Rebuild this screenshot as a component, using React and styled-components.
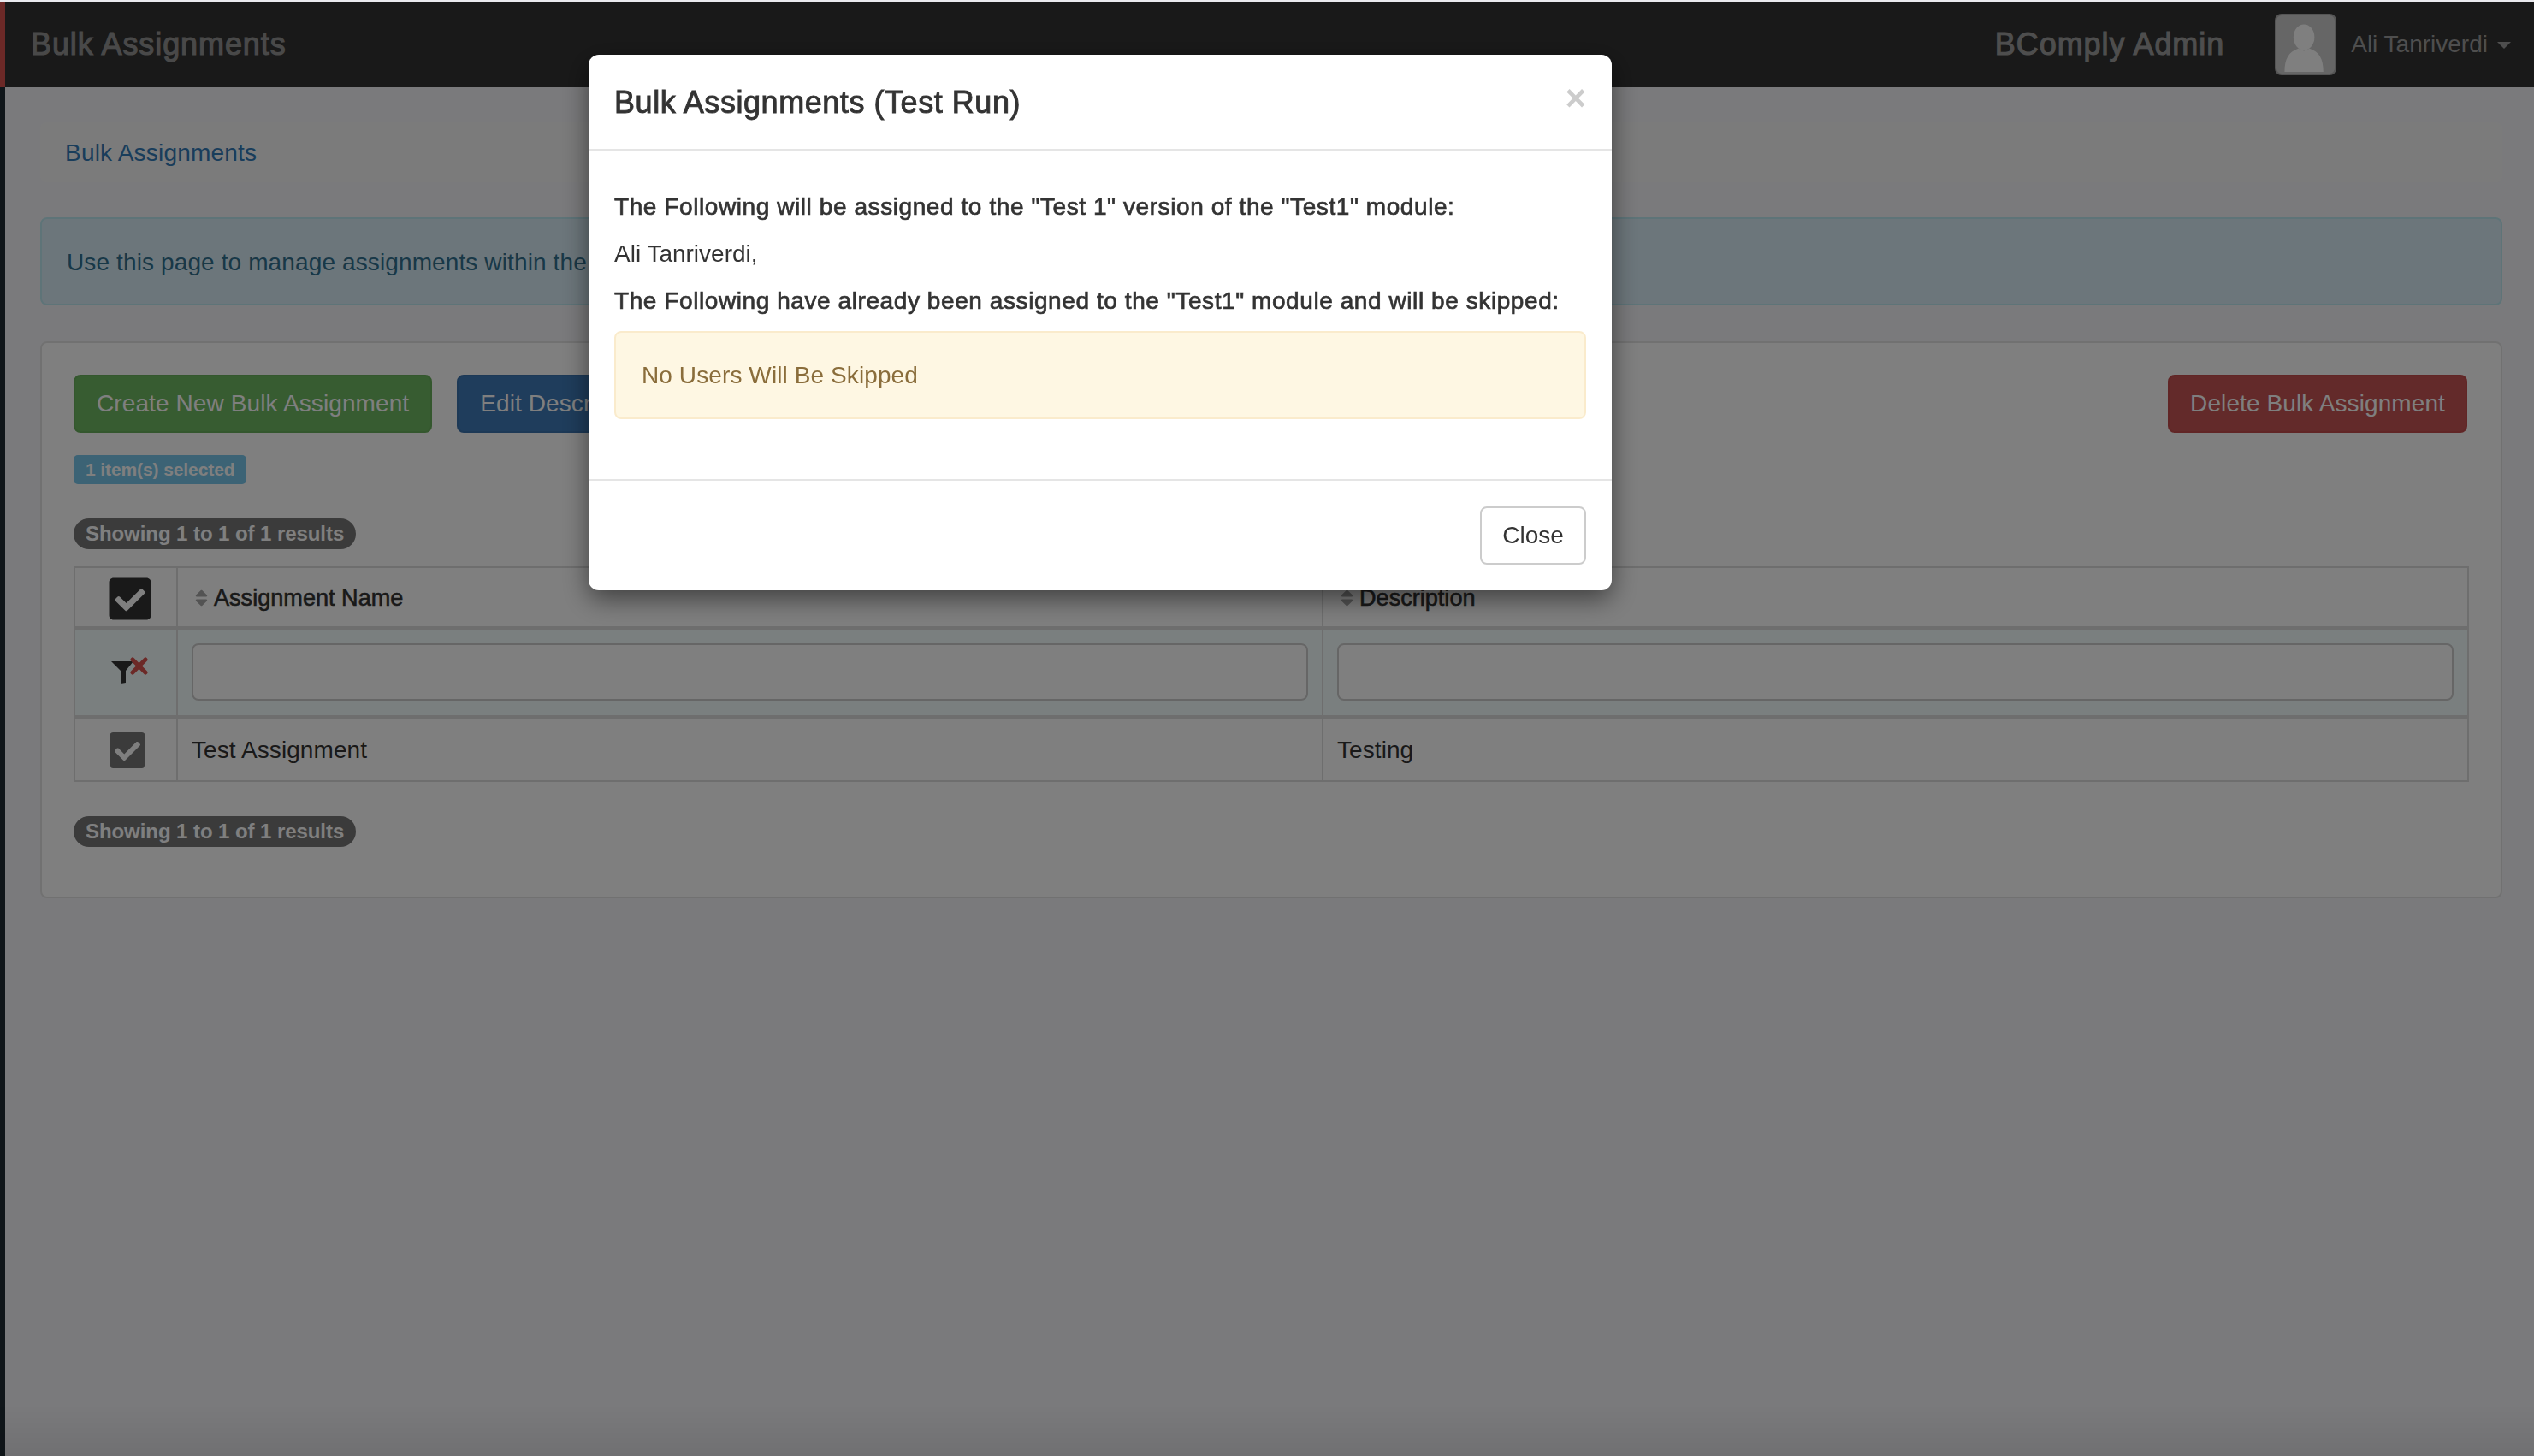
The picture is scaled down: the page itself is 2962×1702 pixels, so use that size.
import React from "react";
import styled, { createGlobalStyle } from "styled-components";
import { FaCheckSquare, FaSort } from "react-icons/fa";

const Global = createGlobalStyle`
  html, body { margin: 0; padding: 0; height: 100%; }
  body { font-family: "Liberation Sans", Arial, sans-serif; font-size: 28px; line-height: 40px; color: #333; background: #f5f5f8; overflow: hidden; }
  * { box-sizing: border-box; }
`;

const TopEdge = styled.div`height: 2px; background: #e9e9ee; position: relative; z-index: 20;`;
const Navbar = styled.header`
  height: 100px; background: #333; border-left: 6px solid #d9534f;
  display: flex; align-items: center; padding: 0 27px 0 30px;
`;
const Brand = styled.div`font-size: 36px; color: #939393; -webkit-text-stroke: 1.1px #939393; letter-spacing: 0.9px; flex: 1; margin-top: -1px;`;
const Role = styled.div`font-size: 36px; color: #9d9d9d; -webkit-text-stroke: 1.1px #9d9d9d; letter-spacing: 0.95px; margin-right: 59px; margin-top: -1px;`;
const Avatar = styled.svg`width: 72px; height: 72px; display: block; margin-right: 17px; border: 2px solid #aaa; border-radius: 8px; background: #ccc;`;
const UserName = styled.div`color: #9d9d9d; font-size: 28px; margin-right: 11px;`;
const Caret = styled.span`width: 0; height: 0; border-left: 8px solid transparent; border-right: 8px solid transparent; border-top: 8px solid #9d9d9d; margin-top: 2px;`;

const Main = styled.main`
  border-left: 6px solid #202c34; min-height: 1600px;
  padding: 41px 37px 0 41px;
`;
const Breadcrumb = styled.nav`height: 70px; background: #f7f7f7; border-radius: 8px; padding: 16px 29px 0; color: #337ab7; margin-bottom: 41px; letter-spacing: 0.2px;`;
const Info = styled.div`height: 103px; background: #d9edf7; border: 2px solid #bce8f1; border-radius: 8px; padding: 31px 29px 0; color: #31708f; margin-bottom: 42px; white-space: nowrap; letter-spacing: 0.12px;`;
const Panel = styled.section`height: 651px; background: #fff; border: 2px solid #e3e3e3; border-radius: 8px; padding: 37px;`;
const Toolbar = styled.div`display: flex; gap: 29px; margin-bottom: 26px;`;
const Btn = styled.button`
  height: 68px; padding: 0 ${p => (p.$push ? 24 : 25)}px; font: inherit; letter-spacing: 0.1px; color: #fff; border-radius: 8px;
  background: ${p => p.$bg}; border: 2px solid ${p => p.$border}; white-space: nowrap;
  margin: ${p => (p.$push ? "0 2px 0 auto" : "0")};
`;
const SelectedLabel = styled.div`
  width: fit-content; height: 34px; padding: 0 14px; background: #78c6ea; color: #fff; font-size: 21px; font-weight: 700;
  line-height: 34px; border-radius: 5px; margin-bottom: 40px; letter-spacing: -0.1px;
`;
const Count = styled.div`
  width: fit-content; height: 36px; padding: 0 14px; background: #777; color: #fff; font-size: 24px; font-weight: 700; line-height: 36px; letter-spacing: -0.07px;
  border-radius: 20px; margin-top: ${p => p.$top}px; margin-bottom: ${p => p.$bottom}px;
`;
const Table = styled.table`width: 2800px; table-layout: fixed; border-collapse: collapse;`;
const Th = styled.th`
  border: 2px solid #ddd; border-bottom-width: 4px; height: 71px; padding: 4px 16px 0 20px; text-align: left; font-weight: 400; color: #333;
  width: ${p => p.$w ? `${p.$w}px` : "auto"}; vertical-align: middle;
`;
const FilterCell = styled.td`border: 2px solid #ddd; border-bottom-width: 4px; background: #f5ffff; height: 104px; padding: 0 16px; position: relative;`;
const Td = styled.td`border: 2px solid #ddd; height: 75px; padding: 1px 15px 0 16px; letter-spacing: 0.08px;`;
const HeadLabel = styled.span`display: inline-flex; align-items: center; gap: 7px; font-size: 27.1px; -webkit-text-stroke: 0.6px #333;`;
const SortIcon = styled(FaSort)`width: 15px; height: 24px; color: #a6a6a6; flex: none;`;
const CheckCellInner = styled.div`display: flex; padding-left: ${p => p.$pad}px; color: ${p => p.$color};`;
const FilterClear = styled.svg`display: block; width: 44px; height: 32px; margin: -4px 0 0 25px;`;
const Filter = styled.div`width: 100%; height: 67px; margin-top: -2px; background: #fff; border: 2px solid #ccc; border-radius: 8px;`;

const Overlay = styled.div`
  position: fixed; inset: 2px 0 0 0; z-index: 10; display: flex; align-items: flex-start; padding: 62px 0 0 688px;
  background: linear-gradient(rgba(0,0,0,.5) calc(100% - 60px), rgba(0,0,0,.54) 100%);
`;
const Modal = styled.div`width: 1196px; height: 626px; background: #fff; border-radius: 12px; box-shadow: 0 10px 30px rgba(0,0,0,.5); display: flex; flex-direction: column;`;
const ModalHead = styled.div`height: 112px; border-bottom: 2px solid #e5e5e5; padding: 36px 30px 0; display: flex; justify-content: space-between; flex: none;`;
const ModalTitle = styled.h4`margin: 0; font-size: 36px; line-height: 40px; font-weight: 400; -webkit-text-stroke: 0.9px #333; letter-spacing: 0.55px;`;
const CloseX = styled.span`font-size: 42px; font-weight: 700; color: #ccc; line-height: 1; margin: -6px 0 0 0;`;
const ModalBody = styled.div`flex: 1; padding: 46px 30px 0;`;
const Line = styled.p`margin: 0 0 15px; line-height: 40px; white-space: nowrap; -webkit-text-stroke: ${p => p.$strong ? "0.7px #333" : "0"}; letter-spacing: ${p => p.$strong ? "0.58px" : "0"};`;
const Warning = styled.div`height: 103px; background: #fef7e3; border: 2px solid #faebcc; border-radius: 8px; padding: 30px; color: #8a6d3b; letter-spacing: 0.1px;`;
const ModalFoot = styled.div`height: 130px; border-top: 2px solid #e5e5e5; padding: 30px; display: flex; justify-content: flex-end; flex: none;`;
const CloseBtn = styled.button`width: 124px; height: 68px; font: inherit; color: #333; background: #fff; border: 2px solid #ccc; border-radius: 8px;`;

export default function App() {
  return (
    <>
      <Global />
      <TopEdge />
      <Navbar>
        <Brand>Bulk Assignments</Brand>
        <Role>BComply Admin</Role>
        <Avatar viewBox="0 0 72 72">
          <ellipse cx="34" cy="27" rx="13" ry="16" fill="#fff" />
          <path d="M10 70c0-16 5-25 17-29l7 3 7-3c12 4 17 13 17 29z" fill="#fff" />
        </Avatar>
        <UserName>Ali Tanriverdi</UserName>
        <Caret />
      </Navbar>
      <Main>
        <Breadcrumb>Bulk Assignments</Breadcrumb>
        <Info>Use this page to manage assignments within the</Info>
        <Panel>
          <Toolbar>
            <Btn $bg="#6fb862" $border="#68ae5c">Create New Bulk Assignment</Btn>
            <Btn $bg="#3e7ab8" $border="#3a72ad">Edit Description</Btn>
            <Btn $bg="#c65454" $border="#c24c4c" $push>Delete Bulk Assignment</Btn>
          </Toolbar>
          <SelectedLabel>1 item(s) selected</SelectedLabel>
          <Count $top={0} $bottom={20}>Showing 1 to 1 of 1 results</Count>
          <Table>
            <thead>
              <tr>
                <Th $w={120}><CheckCellInner $pad={16} $color="#333"><FaCheckSquare size={56} /></CheckCellInner></Th>
                <Th $w={1339}><HeadLabel><SortIcon />Assignment Name</HeadLabel></Th>
                <Th><HeadLabel><SortIcon />Description</HeadLabel></Th>
              </tr>
            </thead>
            <tbody>
              <tr>
                <FilterCell>
                  <FilterClear viewBox="0 0 44 32">
                    <path d="M1 5h26l-9 11v14l-6 1V16z" fill="#333" />
                    <path d="M26 3l15 15M41 3L26 18" stroke="#d9534f" strokeWidth="5" strokeLinecap="round" fill="none" />
                  </FilterClear>
                </FilterCell>
                <FilterCell><Filter /></FilterCell>
                <FilterCell><Filter /></FilterCell>
              </tr>
              <tr>
                <Td><CheckCellInner $pad={21} $color="#777"><FaCheckSquare size={48} /></CheckCellInner></Td>
                <Td>Test Assignment</Td>
                <Td>Testing</Td>
              </tr>
            </tbody>
          </Table>
          <Count $top={40} $bottom={0}>Showing 1 to 1 of 1 results</Count>
        </Panel>
      </Main>
      <Overlay>
        <Modal>
          <ModalHead>
            <ModalTitle>Bulk Assignments (Test Run)</ModalTitle>
            <CloseX>×</CloseX>
          </ModalHead>
          <ModalBody>
            <Line $strong>The Following will be assigned to the "Test 1" version of the "Test1" module:</Line>
            <Line>Ali Tanriverdi,</Line>
            <Line $strong>The Following have already been assigned to the "Test1" module and will be skipped:</Line>
            <Warning>No Users Will Be Skipped</Warning>
          </ModalBody>
          <ModalFoot><CloseBtn>Close</CloseBtn></ModalFoot>
        </Modal>
      </Overlay>
    </>
  );
}
